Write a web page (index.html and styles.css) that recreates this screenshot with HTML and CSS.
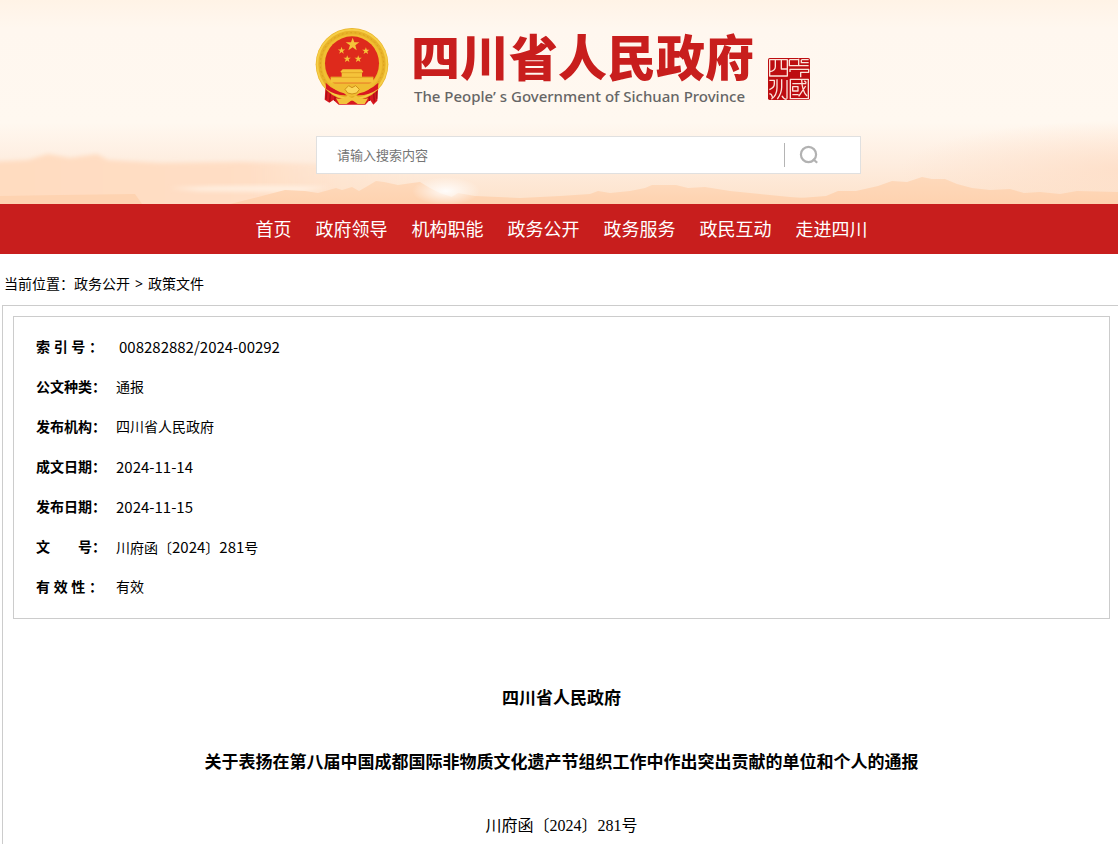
FILE: index.html
```html
<!DOCTYPE html>
<html lang="zh-CN">
<head>
<meta charset="utf-8">
<title>四川省人民政府</title>
<link rel="stylesheet" href="styles.css">
</head>
<body>
<header class="banner">
  <svg class="scenery" viewBox="0 0 1118 204" preserveAspectRatio="none" aria-hidden="true">
    <defs>
      <linearGradient id="sky" x1="0" y1="0" x2="0" y2="1">
        <stop offset="0" stop-color="#fff3e6"/><stop offset=".14" stop-color="#fff7ef"/>
        <stop offset=".6" stop-color="#fff8f0"/><stop offset=".8" stop-color="#feeddf"/>
        <stop offset="1" stop-color="#fde2cb"/>
      </linearGradient>
      <linearGradient id="mist" x1="0" y1="0" x2="1" y2="0">
        <stop offset="0" stop-color="#ffdcc0"/><stop offset=".6" stop-color="#ffdec5"/><stop offset="1" stop-color="#ffe3ce" stop-opacity="0"/>
      </linearGradient>
      <linearGradient id="hill" x1="0" y1="0" x2="0" y2="1">
        <stop offset="0" stop-color="#fed9bb"/><stop offset="1" stop-color="#fed2af"/>
      </linearGradient>
      <radialGradient id="glow"><stop offset="0" stop-color="#fff" stop-opacity=".9"/><stop offset="1" stop-color="#fff" stop-opacity="0"/></radialGradient>
      <radialGradient id="haze"><stop offset="0" stop-color="#fedcc4" stop-opacity=".75"/><stop offset="1" stop-color="#fedcc4" stop-opacity="0"/></radialGradient>
      <filter id="soft" x="-10%" y="-40%" width="120%" height="180%"><feGaussianBlur stdDeviation="2"/></filter>
    </defs>
    <rect width="1118" height="204" fill="url(#sky)"/>
    <path d="M-10 162L28 160 48 154 70 158 97 154 108 160 160 163 240 162 420 166V210H-10Z" fill="url(#mist)" filter="url(#soft)"/>
    <path d="M170 188Q250 184 330 187L300 192 200 191Z" fill="#fff0e2" filter="url(#soft)"/>
    <ellipse cx="1130" cy="170" rx="230" ry="50" fill="url(#haze)"/>
    <path d="M0 196L60 195 135 194 142 204H0Z" fill="#fed3b1"/>
    <path d="M230 204L262 196 285 190 305 191 318 193 336 188 342 190 352 187 359 191 366 187 376 181 384 182 398 185 412 183 420 182 430 188 440 193 455 198 480 200 510 202 540 204Z" fill="url(#hill)"/>
    <path d="M440 204L458 193 475 196 520 198 560 196 590 194 598 191 610 193 630 191 645 188 652 185 676 185 688 188 705 187 730 191 760 194 790 197 820 199 850 201 880 204Z" fill="url(#hill)"/>
    <path d="M750 204L800 198 826 196 838 191 856 191 878 186 892 181 907 182 922 177 932 179 945 179 957 184 972 188 990 190 1010 189 1024 193 1040 192 1060 194 1077 191 1118 192V204Z" fill="url(#hill)"/>
    <ellipse cx="446" cy="191" rx="34" ry="14" fill="url(#glow)"/>
  </svg>
  <div class="banner-inner">
    <div class="brand">
      <svg class="emblem" viewBox="20 15 240 252" aria-hidden="true">
        <path d="M61 185L220 185 216 242 204 254 194 239 180 254H100L84 240 72 248 58 239Z" fill="#d81820"/>
        <path d="M66 200L62 238M77 206L73 245M91 211L88 243M189 211L193 243M204 206L207 245M213 202L214 236" stroke="#a80f16" stroke-width="4"/>
        <circle cx="140" cy="133" r="109" fill="#e8b229"/>
        <circle cx="140" cy="133" r="104" fill="none" stroke="#f6cd45" stroke-width="6"/>
        <circle cx="140" cy="133" r="95" fill="none" stroke="#dba01c" stroke-width="3" stroke-dasharray="5 8"/>
        <circle cx="140" cy="133" r="86" fill="none" stroke="#f1bf32" stroke-width="9"/>
        <circle cx="140" cy="130" r="81" fill="#de2a1c"/>
        <g fill="#f5c33a">
          <path id="star" d="M142 53L147 67 162 67 150 76 154 91 142 82 129 91 134 76 121 67 137 67Z"/>
          <use href="#star" transform="translate(32 52) scale(.54)"/>
          <use href="#star" transform="translate(105 53) scale(.54)"/>
          <use href="#star" transform="translate(49 77) scale(.54)"/>
          <use href="#star" transform="translate(82 77) scale(.54)"/>
          <path d="M112 148H168L174 155 170 158V170H204V188H76V170H109V158L105 155Z"/>
        </g>
        <path d="M109 158H171M76 172H204" stroke="#d8951c" stroke-width="2"/>
        <path d="M61 188Q92 221 137 213Q185 221 219 188L218 207Q183 232 140 224Q97 232 62 207Z" fill="#d81820"/>
        <path d="M70 190H210Q190 216 162 220L149 229H128L116 220Q88 214 70 190Z" fill="#f0bd32"/>
        <path d="M119 208L130 197 140 203 151 197 162 208 154 219 140 222 127 219Z" fill="#fbd75a" stroke="#d0901a" stroke-width="3"/>
        <path d="M92 235Q116 241 128 226L140 236 152 226Q165 241 188 235L178 252H157L140 240 124 252H102Z" fill="#f3c33c"/>
      </svg>
      <div class="brand-text">
        <div class="brand-name">四川省人民政府</div>
        <div class="brand-en">The People’ s Government of Sichuan Province</div>
      </div>
      <svg class="seal" viewBox="24 24 126 126" aria-hidden="true">
        <rect x="24" y="24" width="126" height="126" rx="5" fill="#bd0d10"/>
        <g fill="none" stroke="#fbe3da" stroke-width="4" stroke-linejoin="round">
          <path d="M29 29H82V78H29ZM46 29V50Q46 61 30 65M64 29V57H81"/>
          <path d="M88 29H116M124 29H146M88 29V47H146M116 26V47M124 29V38H146M90 66V58H146V67H122V82"/>
          <path d="M28 91H43V102Q43 113 28 119M28 132Q36 130 38 146M51 88V113Q51 135 34 148M65 88V112Q65 130 52 147M81 90V146M66 137Q70 147 80 148"/>
          <path d="M91 88H145V146H91ZM97 101H139M125 89Q126 123 141 138M137 108L116 139M98 110H114V123H98ZM97 134H116M133 92L139 98"/>
        </g>
      </svg>
    </div>
    <form class="search" role="search">
      <input class="search-input" type="text" placeholder="请输入搜索内容" aria-label="搜索内容">
      <button class="search-button" type="button" aria-label="搜索">
        <svg viewBox="0 0 20 20" width="20" height="20" fill="none" stroke="#b2b2b2" stroke-width="2.2" aria-hidden="true"><circle cx="9.5" cy="9.5" r="7.6"/><path d="M14 14L18.2 17.8"/></svg>
      </button>
    </form>
  </div>
</header>
<nav class="nav" aria-label="主导航">
  <a href="#">首页</a><a href="#">政府领导</a><a href="#">机构职能</a><a href="#">政务公开</a><a href="#">政务服务</a><a href="#">政民互动</a><a href="#">走进四川</a>
</nav>
<div class="crumbs">当前位置：<a href="#">政务公开</a><span class="separator">&gt;</span><a href="#">政策文件</a></div>
<main class="document">
  <dl class="meta">
    <div class="meta-row"><dt>索 引 号 ：</dt><dd class="numeric indented">008282882/2024-00292</dd></div>
    <div class="meta-row"><dt>公文种类：</dt><dd>通报</dd></div>
    <div class="meta-row"><dt>发布机构：</dt><dd>四川省人民政府</dd></div>
    <div class="meta-row"><dt>成文日期：</dt><dd class="numeric">2024-11-14</dd></div>
    <div class="meta-row"><dt>发布日期：</dt><dd class="numeric">2024-11-15</dd></div>
    <div class="meta-row"><dt>文　　号：</dt><dd>川府函〔<span class="numeric">2024</span>〕<span class="numeric">281</span>号</dd></div>
    <div class="meta-row"><dt>有 效 性 ：</dt><dd>有效</dd></div>
  </dl>
  <article class="article">
    <h1>四川省人民政府</h1>
    <h2>关于表扬在第八届中国成都国际非物质文化遗产节组织工作中作出突出贡献的单位和个人的通报</h2>
    <p>川府函〔2024〕281号</p>
  </article>
</main>
</body>
</html>
```

FILE: styles.css
```css
* { box-sizing: border-box; }

body {
  display: flex;
  flex-direction: column;
  min-height: 100vh;
  margin: 0;
  background: #fff;
  color: #000;
  font: 14px/20px "Noto Sans", "Noto Sans CJK SC", sans-serif;
}

a { color: inherit; text-decoration: none; }

.banner {
  position: relative;
  padding: 24px 0 30px;
}

.scenery {
  position: absolute;
  inset: 0;
  width: 100%;
  height: 100%;
}

.banner-inner {
  position: relative;
  max-width: 604px;
  margin: 0 auto;
  padding-left: 59px;
}

.brand {
  display: flex;
  align-items: flex-start;
  height: 112px;
}

.emblem {
  flex: none;
  width: 80px;
  height: 84px;
  margin: 1px 0 0 -4px;
}

.brand-text {
  flex: none;
  width: 343px;
  margin-left: 19px;
  padding-top: 8px;
  white-space: nowrap;
}

.brand-name {
  color: #c81e1d;
  font: 900 49px/46px "Noto Sans CJK SC", sans-serif;
}

.brand-en {
  padding-left: 3px;
  color: #666;
  font: 500 15px/36px "Noto Sans", sans-serif;
}

.seal {
  flex: none;
  width: 42px;
  height: 42px;
  margin: 34px 0 0 14px;
}

.search {
  display: flex;
  align-items: center;
  height: 38px;
  border: 1px solid #e0e0e0;
  background: #fff;
}

.search-input {
  flex: 1;
  min-width: 0;
  height: 36px;
  padding: 0 20px 2px;
  border: 0;
  background: none;
  color: #333;
  font: 13px "Noto Sans CJK SC", sans-serif;
}

.search-input::placeholder { color: #757575; opacity: 1; }

.search-button {
  display: flex;
  align-items: center;
  width: 76px;
  height: 24px;
  padding: 0 0 0 14px;
  border: 0;
  border-left: 1px solid #b4b4b4;
  background: none;
}

.nav {
  display: flex;
  flex-wrap: wrap;
  justify-content: center;
  gap: 0 24px;
  padding-left: 5px;
  background: #c81e1d;
  color: #fff;
  font-size: 18px;
  line-height: 50px;
}

.crumbs { padding: 20px 4px 11px; }

.separator { padding: 0 5px; }

.document {
  flex: 1;
  margin-left: 2px;
  padding: 10px 8px 0 10px;
  border: solid #ccc;
  border-width: 1px 0 0 1px;
}

.meta {
  margin: 0;
  padding: 10px 22px 11px;
  border: 1px solid #ccc;
}

.meta-row {
  display: flex;
  height: 40px;
  line-height: 40px;
}

.meta-row dt { flex: none; width: 80px; font-weight: 700; }

.meta-row dd { margin: 0; }

.meta-row .indented { padding-left: 3px; }

.numeric { font-family: "Noto Sans CJK SC", sans-serif; font-size: 15px; }

.article {
  padding-top: 63px;
  text-align: center;
  line-height: 32px;
}

.article h1,
.article h2 {
  margin: 0 0 32px;
  font-size: 17px;
  font-weight: 700;
}

.article p {
  margin: 0;
  font-family: "Liberation Serif", "Noto Sans CJK SC", serif;
  font-size: 16px;
}
```
